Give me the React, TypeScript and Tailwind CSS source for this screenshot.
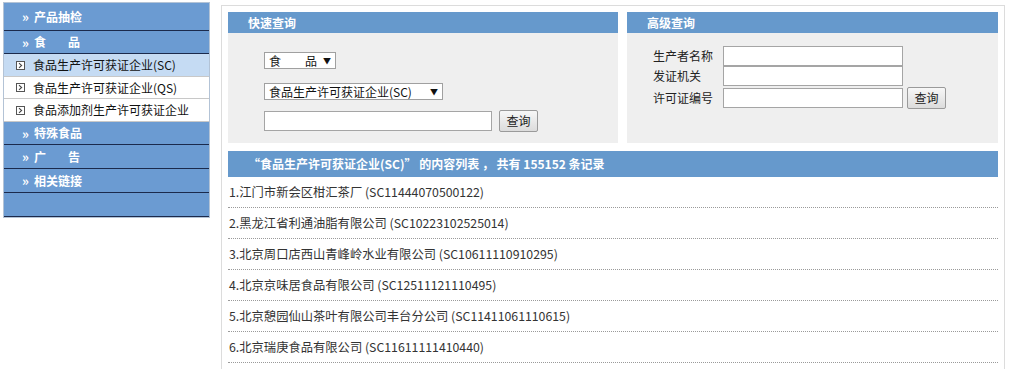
import React from "react";

const font = { fontFamily: '"Noto Sans CJK SC", "Noto Sans", sans-serif' };

function SideHeader({ children, h = "h-[23px]" }: { children: React.ReactNode; h?: string }) {
  return (
    <div className={`${h} bg-[#6b9bd2] border-b border-[#1b2a4c] flex items-center text-white font-bold text-[12px]`}>
      <span className="ml-[18px] mr-[5px] text-[13px] leading-none">»</span>
      {children}
    </div>
  );
}

function ItemIcon() {
  return (
    <svg width="9" height="9" viewBox="0 0 9 9" className="ml-[12px] mr-[8px]">
      <rect x="0.5" y="0.5" width="8" height="8" fill="white" stroke="#555" />
      <path d="M3 2.2 L5.6 4.5 L3 6.8" fill="none" stroke="#444" strokeWidth="1.1" />
    </svg>
  );
}

function SideItem({ children, active = false, h = "h-[23px]" }: { children: React.ReactNode; active?: boolean; h?: string }) {
  return (
    <div className={`${h} ${active ? "bg-[#c5dbf3]" : "bg-white"} border-b border-[#c8c8c8] flex items-center text-[12px] text-[#111]`}>
      <ItemIcon />
      <span>{children}</span>
    </div>
  );
}

function PanelHeader({ children }: { children: React.ReactNode }) {
  return (
    <div className="h-[21px] bg-[#6699cc] flex items-center text-white font-bold text-[12px] pl-[20px]">
      {children}
    </div>
  );
}

function Button() {
  return (
    <div className="w-[39px] h-[22px] border border-[#9a9a9a] rounded-[2px] bg-gradient-to-b from-[#f7f7f7] to-[#dcdcdc] flex items-center justify-center text-[12px] text-[#222]">
      查询
    </div>
  );
}

const rows = [
  "1.江门市新会区柑汇茶厂 (SC11444070500122)",
  "2.黑龙江省利通油脂有限公司 (SC10223102525014)",
  "3.北京周口店西山青峰岭水业有限公司 (SC10611110910295)",
  "4.北京京味居食品有限公司 (SC12511121110495)",
  "5.北京憩园仙山茶叶有限公司丰台分公司 (SC11411061110615)",
  "6.北京瑞庚食品有限公司 (SC11611111410440)",
];

export default function App() {
  return (
    <div className="w-[1011px] h-[369px] overflow-hidden bg-white flex items-start" style={font}>
      {/* Sidebar */}
      <div className="ml-[3px] mt-[2px] w-[207px] border border-[#b3c3d6]">
        <SideHeader h="h-[28px]">产品抽检</SideHeader>
        <SideHeader>
          食<span className="ml-[22px]">品</span>
        </SideHeader>
        <SideItem active>食品生产许可获证企业(SC)</SideItem>
        <SideItem h="h-[22px]">食品生产许可获证企业(QS)</SideItem>
        <SideItem>食品添加剂生产许可获证企业</SideItem>
        <SideHeader>特殊食品</SideHeader>
        <SideHeader h="h-[24px]">
          广<span className="ml-[22px]">告</span>
        </SideHeader>
        <SideHeader h="h-[24px]">相关链接</SideHeader>
        <div className="h-[24px] bg-[#6b9bd2] border-b border-[#1b2a4c]" />
      </div>

      {/* Main */}
      <div className="ml-[11px] mt-[5px] w-[784px] h-[400px] border-l border-t border-r border-[#dcdcdc] pl-[6px] pr-[6px] pt-[6px]">
        <div className="flex gap-[9px]">
          {/* Quick search */}
          <div className="w-[390px] h-[131px] bg-[#efefef]">
            <PanelHeader>快速查询</PanelHeader>
            <div className="pl-[36px] pt-[19px]">
              <div className="w-[72px] h-[17px] border border-[#a0a0a0] bg-white flex items-center text-[12px] text-[#111]">
                <span className="ml-[4px]">食</span>
                <span className="ml-[24px]">品</span>
                <span className="ml-[6px] text-[8px]">▼</span>
              </div>
              <div className="mt-[14px] w-[179px] h-[17px] border border-[#a0a0a0] bg-white flex items-center text-[12px] text-[#111]">
                <span className="ml-[4px]">食品生产许可获证企业(SC)</span>
                <span className="ml-[18px] text-[8px]">▼</span>
              </div>
              <div className="mt-[10px] flex items-center">
                <div className="w-[228px] h-[20px] border border-[#a5a5a5] bg-white" />
                <div className="ml-[7px]">
                  <Button />
                </div>
              </div>
            </div>
          </div>

          {/* Advanced search */}
          <div className="flex-1 h-[131px] bg-[#efefef]">
            <PanelHeader>高级查询</PanelHeader>
            <div className="pl-[26px] pt-[13px] text-[12px] text-[#222]">
              <div className="flex items-center h-[20px]">
                <span className="w-[70px]">生产者名称</span>
                <div className="w-[180px] h-[20px] border border-[#a5a5a5] bg-white" />
              </div>
              <div className="flex items-center h-[20px]">
                <span className="w-[70px]">发证机关</span>
                <div className="w-[180px] h-[20px] border border-[#a5a5a5] bg-white" />
              </div>
              <div className="flex items-center h-[22px] mt-[1px]">
                <span className="w-[70px]">许可证编号</span>
                <div className="w-[180px] h-[20px] border border-[#a5a5a5] bg-white" />
                <div className="ml-[4px]">
                  <Button />
                </div>
              </div>
            </div>
          </div>
        </div>

        {/* List */}
        <div className="mt-[8px] h-[26px] bg-[#6699cc] flex items-center pl-[20px] text-white font-bold text-[12px] whitespace-pre">
          “食品生产许可获证企业(SC)” 的内容列表 ， 共有 155152 条记录
        </div>
        {rows.map((r) => (
          <div
            key={r}
            className="h-[31px] border-b border-dotted border-[#9a9a9a] flex items-center pl-[1px] text-[12.3px] text-[#333]"
          >
            {r}
          </div>
        ))}
      </div>
    </div>
  );
}
